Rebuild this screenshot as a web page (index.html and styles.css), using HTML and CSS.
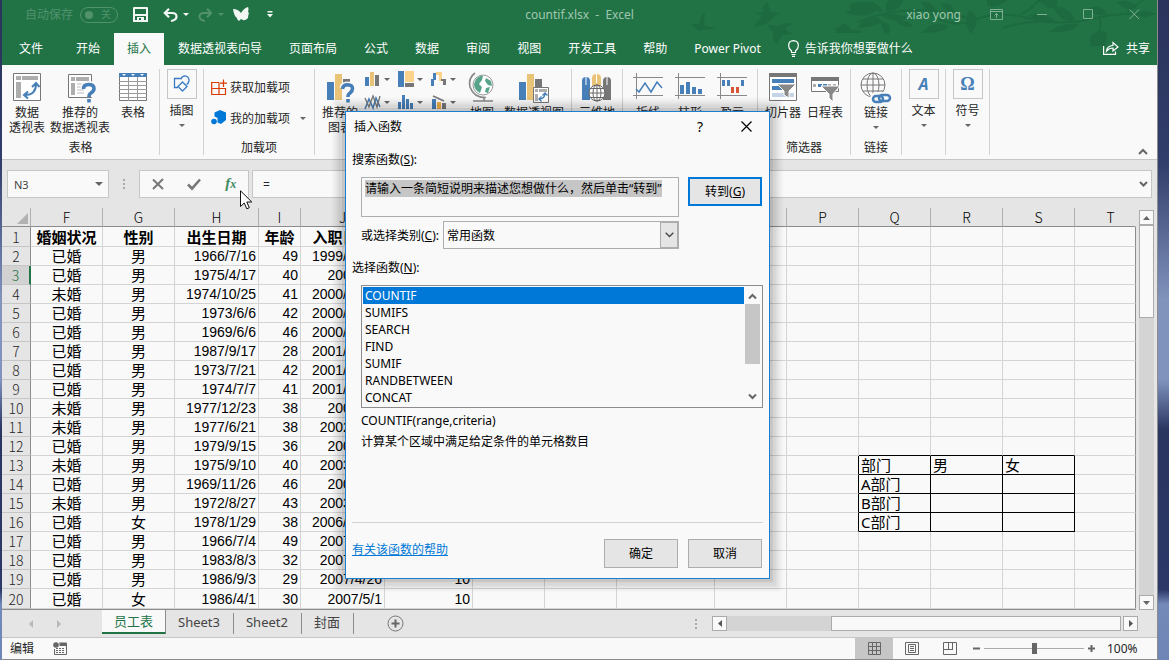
FILE: index.html
```
<!DOCTYPE html>
<html lang="zh-CN">
<head>
  <meta charset="UTF-8" />
  <meta name="viewport" content="width=device-width, initial-scale=1" />
  <title>countif.xlsx - Excel</title>
  <link rel="stylesheet" href="styles.css">
</head>
<body>
  <div class="window">

    <header class="titlebar">
      <svg class="branches" width="470" height="46" viewBox="0 0 470 46">
        <g fill="#1d6a40">
          <path d="M4 24 L12 24 Q13 16 18 13 Q17 20 17 25 L29 29 Q18 29 12 31 Q9 28 4 24Z"/>
          <path d="M66 13 L77 12 Q74 6 80 2 L84 12 L94 13 Q86 16 82 22 Q76 27 67 26 Q73 20 75 15Z"/>
          <path d="M81 25 L92 26 Q98 21 106 24 L98 28 Q100 32 108 34 L96 35 Q92 38 91 44 Q84 40 86 33Z"/>
          <path d="M146 28 Q152 29 155 24 Q162 23 163 29 L174 31 L174 33 L147 33 Q152 31 146 28Z"/>
          <path d="M158 12 Q170 6 184 14 Q170 18 158 12Z M163 9 Q160 2 176 2 Q186 6 188 13 Q174 14 163 9Z M178 2 Q190 -1 196 12 Q184 12 178 2Z M199 3 Q208 -4 216 0 Q212 12 199 12Z M194 15 Q210 12 222 18 Q206 24 194 15Z M176 20 Q190 14 196 22 Q186 27 170 28Z M194 22 Q206 22 202 34 Q194 32 194 22Z M208 20 Q222 20 226 27 Q214 28 208 20Z"/>
          <path d="M234 2 Q246 0 250 14 Q238 12 234 2Z M254 4 Q264 0 268 12 Q258 14 254 4Z M234 33 Q246 20 262 26 Q258 33 234 33Z M282 10 Q296 18 284 34 Q276 24 282 10Z M300 0 L320 0 Q312 8 300 6Z M350 0 L370 0 Q372 10 362 8Z"/>
          <path d="M342 15 Q360 12 370 22 Q354 26 342 15Z M366 6 Q386 8 388 22 Q372 22 366 6Z M362 32 Q374 22 392 24 Q384 34 362 32Z M410 32 Q424 28 418 46 L404 46 Q400 36 410 32Z M430 2 Q444 -2 450 8 Q438 12 430 2Z M448 14 Q460 8 468 14 Q458 20 448 14Z M402 8 Q414 4 420 14 Q408 18 402 8Z"/>
        </g>
        <g fill="none" stroke="#1d6a40" stroke-width="2">
          <path d="M170 22 Q200 10 234 10 Q262 12 280 18"/>
          <path d="M240 12 Q264 30 288 20 Q310 10 340 18 Q370 26 400 20 Q430 12 468 14"/>
          <path d="M316 28 Q334 22 352 22 M334 14 Q344 10 352 0 M412 18 Q416 24 410 36 M440 12 Q450 4 456 0"/>
        </g>
      </svg>
      <div class="quick">
        <span class="autosave">自动保存</span>
        <button class="toggle" type="button" aria-label="自动保存"><i></i>关</button>
        <button class="qbtn save" type="button" aria-label="保存">
          <svg width="15" height="15" viewBox="0 0 15 15"><path fill="#f3f7f4" fill-rule="evenodd" d="M1 0H14Q15 0 15 1V15H0V1Q0 0 1 0ZM2 2V7H13V2ZM2 9V13H4V10H11V13H13V9ZM6 11V13H8V11Z"/></svg>
        </button>
        <button class="qbtn undo" type="button" aria-label="撤消">
          <svg width="15" height="14" viewBox="0 0 15 14"><path d="M1.500 5H9Q13.500 5 13.500 8.500T8 13M6 .8L1.800 5L6 9.200" fill="none" stroke="#f3f7f4" stroke-width="2.200"/></svg>
          <i class="caret"></i>
        </button>
        <button class="qbtn redo" type="button" aria-label="恢复">
          <svg width="15" height="14" viewBox="0 0 15 14"><path d="M13.500 5H6Q1.500 5 1.500 8.500T7 13M9 .8L13.200 5L9 9.200" fill="none" stroke="#51926d" stroke-width="2"/></svg>
          <i class="caret"></i>
        </button>
        <button class="qbtn fly" type="button" aria-label="方方格子">
          <svg width="17" height="15" viewBox="0 0 17 15"><path fill="#f3f7f4" d="M0 2Q5 2 8 6Q11 1 15 0Q16 1 15 5L16 6Q15 8 15 11Q12 14 10 13L8 12L6 14Q4 13 4 11Q1 9 0 2Z"/></svg>
        </button>
        <button class="qbtn more" type="button" aria-label="自定义快速访问工具栏">
          <svg width="6" height="7" viewBox="0 0 6 7"><path fill="#f3f7f4" d="M.5 0H5.500V1.400H.5ZM0 3H6L3 6.500Z"/></svg>
        </button>
      </div>
      <div class="doc-title">countif.xlsx&nbsp; -&nbsp; Excel</div>
      <div class="controls">
        <span class="user">xiao yong</span>
        <button type="button" aria-label="功能区显示选项"><svg width="13" height="11" viewBox="0 0 13 11"><path d="M.5 .5H12.500V10.500H.5ZM.5 2.500H12.500M6.500 9V4.500M4.500 6.500L6.500 4.500L8.500 6.500"/></svg></button>
        <button type="button" aria-label="最小化"><svg width="11" height="11" viewBox="0 0 11 11"><path d="M0 5.500H10"/></svg></button>
        <button type="button" aria-label="最大化"><svg width="11" height="11" viewBox="0 0 11 11"><path d="M.5 .5H9.500V9.500H.5Z"/></svg></button>
        <button type="button" aria-label="关闭"><svg width="11" height="11" viewBox="0 0 11 11"><path d="M.5 .5L10 10M10 .5L.5 10"/></svg></button>
      </div>
    </header>

    <nav class="tabs">
      <button class="tab file" type="button">文件</button>
      <button class="tab" type="button">开始</button>
      <button class="tab active" type="button">插入</button>
      <button class="tab" type="button">数据透视表向导</button>
      <button class="tab" type="button">页面布局</button>
      <button class="tab" type="button">公式</button>
      <button class="tab" type="button">数据</button>
      <button class="tab" type="button">审阅</button>
      <button class="tab" type="button">视图</button>
      <button class="tab" type="button">开发工具</button>
      <button class="tab" type="button">帮助</button>
      <button class="tab" type="button">Power Pivot</button>
      <button class="tab tell" type="button">
        <svg width="11" height="17" viewBox="0 0 11 17"><path d="M3.500 12.500V11Q.6 8.500 .6 5.500Q.8 .7 5.500 .6Q10.200 .7 10.400 5.500Q10.400 8.500 7.500 11V12.500ZM3.500 14.500H7.500M4 16.300H7" fill="none" stroke="#fff" stroke-width="1.200"/></svg>
        告诉我你想要做什么
      </button>
      <button class="tab share" type="button">
        <svg width="16" height="14" viewBox="0 0 16 14"><path d="M.6 4V13.400H12.500V10.500M3.500 10Q4 5 10 4.500V1.500L15 6L10 10V7Q6 7 3.500 10Z" fill="none" stroke="#fff" stroke-width="1.200"/></svg>
        共享
      </button>
    </nav>

    <section class="ribbon">
      <div class="group g-tables">
        <div class="items">
          <button class="big" type="button">
            <svg width="28" height="28" viewBox="0 0 28 28"><path d="M.5 .5H27.500V27.500H.5Z" fill="#fff" stroke="#777"/><path d="M3 3H8V7H3ZM9 3H25V7H9ZM3 9H8V25H3Z" fill="#adadad"/><path d="M12 22Q23 22 23 11M19 14L23 10L26.500 14M15 18.500L11 22L15 25.500" fill="none" stroke="#477fb9" stroke-width="2"/></svg>
            <span>数据<br>透视表</span>
          </button>
          <button class="big" type="button">
            <svg width="28" height="28" viewBox="0 0 28 28"><path d="M2.500 1.500H25.500V24.500H2.500Z" fill="#fff" stroke="#777"/><path d="M5 4H9V8H5ZM10 4H23V8H10ZM5 10H9V22H5Z" fill="#adadad"/><path d="M11 11H18M11 14H18M11 17H18M11 20H18" stroke="#bbb"/><path d="M17.500 15Q17.500 11 22.500 11Q28 11 28 15.500Q28 18 25 20Q23 21.500 23 24" fill="none" stroke="#f9f9f9" stroke-width="6"/><path d="M17.500 16Q17.500 11.500 22.500 11.500Q28 11.500 28 15.500Q28 18 25 20Q23 21 23 24M23 26V29.500" fill="none" stroke="#477fb9" stroke-width="3.600"/></svg>
            <span>推荐的<br>数据透视表</span>
          </button>
          <button class="big" type="button">
            <svg width="28" height="28" viewBox="0 0 28 28"><path d="M.5 .5H27.500V27.500H.5Z" fill="#fff" stroke="#777"/><path d="M0 0H28V4H0Z" fill="#477fb9"/><path d="M3 1H7L5 3ZM12 1H16L14 3ZM21 1H25L23 3Z" fill="#fff"/><path d="M0 8.500H28M0 12.500H28M0 16.500H28M0 20.500H28M0 24.500H28M9.500 4V28M18.500 4V28" stroke="#999"/></svg>
            <span>表格</span>
          </button>
        </div>
        <div class="caption">表格</div>
      </div>

      <div class="group g-narrow">
        <div class="items">
          <button class="boxed" type="button">
            <b><svg width="18" height="18" viewBox="0 0 18 18"><path d="M5 12.500H1.500V3.500H9M8 4Q9 .8 12 .8Q16.500 1.500 16 6Q15.500 8.500 13.500 9.500M9.500 7L14 11.500L9.500 16L5 11.500Z" fill="none" stroke="#3b7cc4" stroke-width="1.300"/></svg></b>
            <span>插图</span><i class="caret"></i>
          </button>
        </div>
      </div>

      <div class="group g-addins">
        <div class="items stack">
          <button class="line" type="button">
            <svg width="16" height="17" viewBox="0 0 16 17"><path d="M8 3.500H.7V15.500H14.500V9.500H.7M8 3.500V15.500M12.500 .5V8M9 4.200H16" fill="none" stroke="#d83b01" stroke-width="1.200"/></svg>
            获取加载项
          </button>
          <button class="line" type="button">
            <svg width="16" height="16" viewBox="0 0 16 16"><path d="M9 0L15 2.500V10L10 14L6.500 12.500V8L3.500 6.500V2.500Z" fill="#0078d7"/><circle cx="3" cy="11.500" r="2.800" fill="#0078d7"/></svg>
            我的加载项 <i class="caret"></i>
          </button>
        </div>
        <div class="caption">加载项</div>
      </div>

      <div class="group g-charts">
        <div class="items">
          <button class="big w50" type="button">
            <svg width="28" height="28" viewBox="0 0 28 28"><path d="M1 9H8V27H1Z" fill="#477fb9"/><path d="M9 1H16V27H9Z" fill="#e9c478"/><path d="M17 6H24V12H17Z" fill="#777"/><path d="M16.500 15Q17 11.500 21.500 11.500Q26.500 11.500 26.500 15.500Q26.500 18 24 20Q22 21 22 24" fill="none" stroke="#f9f9f9" stroke-width="6"/><path d="M16.500 16Q17 11.800 21.500 11.800Q26.500 12 26.500 15.500Q26.500 18 24 20Q22 21 22 24M22 26V29.500" fill="none" stroke="#477fb9" stroke-width="3.600"/></svg>
            <span>推荐的<br>图表</span>
          </button>
          <div class="minis">
            <button type="button" aria-label="柱形图"><svg width="16" height="16" viewBox="0 0 16 16"><path d="M0 6H4V15H0Z" fill="#477fb9"/><path d="M5 1H9V15H5Z" fill="#e9c478"/><path d="M10 4H14V15H10Z" fill="#777"/></svg><i class="caret"></i></button>
            <button type="button" aria-label="层次结构图"><svg width="16" height="16" viewBox="0 0 16 16"><path d="M0 0H6V16H0Z" fill="#477fb9"/><path d="M7 0H16V11H7Z" fill="#fbd38a"/><path d="M7 12H16V16H7Z" fill="#777"/></svg><i class="caret"></i></button>
            <button type="button" aria-label="瀑布图"><svg width="16" height="16" viewBox="0 0 16 16"><path d="M0 8H3V15H0ZM2 2H5V9H2Z" fill="#477fb9"/><path d="M5 1H11V10H8V4H5Z" fill="#fbd38a"/><path d="M10 8H15V14H12V10H10Z" fill="#777"/></svg><i class="caret"></i></button>
            <button type="button" aria-label="折线图"><svg width="16" height="16" viewBox="0 0 16 16"><path d="M0 15L4 5L8 14L11 4L15 13" fill="none" stroke="#477fb9" stroke-width="1.500"/><path d="M0 4L4 13L8 2L12 13L15 2" fill="none" stroke="#777" stroke-width="1.300"/></svg><i class="caret"></i></button>
            <button type="button" aria-label="统计图"><svg width="16" height="16" viewBox="0 0 16 16"><path d="M0 8H3V15H0ZM4 1H7V15H4ZM8 5H11V15H8ZM12 9H15V15H12Z" fill="#477fb9"/></svg><i class="caret"></i></button>
            <button type="button" aria-label="组合图"><svg width="16" height="16" viewBox="0 0 16 16"><path d="M1 5H5V15H1Z" fill="#477fb9"/><path d="M6 8H10V15H6Z" fill="#f0b24a"/><path d="M11 9H15V15H11Z" fill="#777"/><path d="M2 2L13 7" stroke="#777" stroke-width="1.500"/></svg><i class="caret"></i></button>
          </div>
          <button class="big" type="button">
            <svg width="28" height="28" viewBox="0 0 28 28"><circle cx="15" cy="12" r="10" fill="#fff" stroke="#999"/><path d="M8 6Q12 2 15 3L14 7L11 11L14 14L12 20Q6 17 6 11ZM18 5L23 8L24 13L20 12L17 8ZM18 15L22 14L20 20L17 19Z" fill="#57a48a"/><path d="M7 0Q0 5 2 14Q6 25 18 24.500M16 24V28M5 28H25" fill="none" stroke="#888" stroke-width="1.600"/></svg>
            <span>地图</span>
          </button>
          <button class="big" type="button">
            <svg width="30" height="28" viewBox="0 0 30 28"><path d="M0 9H7V27H0Z" fill="#477fb9"/><path d="M8 1H15V27H8Z" fill="#e9c478"/><path d="M16 6H23V14H16Z" fill="#777"/><path d="M14.500 14.500H29.500V29.500H14.500Z" fill="#fff" stroke="#777"/><path d="M16 16H19V19H16ZM20 16H28V19H20ZM16 21H19V28H16Z" fill="#adadad"/><path d="M20 26Q26 26 26 20M23.500 22.500L26 20L28.500 22.500M22.500 23.500L20 26L22.500 28.500" fill="none" stroke="#477fb9" stroke-width="1.300"/></svg>
            <span>数据透视图</span>
          </button>
        </div>
        <div class="caption">图表</div>
      </div>

      <div class="group g-link">
        <div class="items">
          <button class="big" type="button">
            <svg width="30" height="28" viewBox="0 0 30 28"><path d="M0 27V8Q0 4 4 4T8 8V27Z" fill="#477fb9"/><path d="M10 24V5Q10 1 14.500 1T19 5V24Z" fill="#e9c478"/><path d="M21 27V8Q21 4 25 4T29 8V27Z" fill="#777"/><path d="M4 4V12M14.500 1V10M25 4V12" stroke="#fff"/><circle cx="15" cy="20" r="8" fill="#fff" stroke="#666"/><path d="M7 20H23M15 12V28M9 15.500H21M9 24.500H21" stroke="#666" fill="none"/><ellipse cx="15" cy="20" rx="4" ry="8" fill="none" stroke="#666"/></svg>
            <span>三维地<br>图</span>
          </button>
        </div>
        <div class="caption">演示</div>
      </div>

      <div class="group g-spark">
        <div class="items">
          <button class="big w42" type="button">
            <svg width="30" height="28" viewBox="0 0 30 28"><path d="M0 4.500H30M0 22.500H30M3.500 0V26" stroke="#888"/><path d="M3 16L6 19L12 10L18 19L24 9L29 15" fill="none" stroke="#477fb9" stroke-width="1.500"/></svg>
            <span>折线</span>
          </button>
          <button class="big w42" type="button">
            <svg width="30" height="28" viewBox="0 0 30 28"><path d="M0 4.500H30M0 22.500H30M3.500 0V26" stroke="#888"/><path d="M5 12H9V21H5ZM11 9H15V21H11ZM17 14H21V21H17ZM23 16H27V21H23Z" fill="#477fb9"/></svg>
            <span>柱形</span>
          </button>
          <button class="big w42" type="button">
            <svg width="30" height="28" viewBox="0 0 30 28"><path d="M0 4.500H30M0 22.500H30M3.500 0V26" stroke="#888"/><path d="M5 7H8V13H5ZM10 7H13V13H10ZM24 7H27V13H24Z" fill="#477fb9"/><path d="M14 14H17V20H14ZM19 14H22V20H19Z" fill="#d65532"/></svg>
            <span>盈亏</span>
          </button>
        </div>
        <div class="caption">迷你图</div>
      </div>

      <div class="group g-filters">
        <div class="items spaced">
          <button class="big" type="button">
            <svg width="28" height="28" viewBox="0 0 28 28"><path d="M.5 .5H27.500V27.500H.5Z" fill="#fff" stroke="#777"/><path d="M0 0H28V4H0Z" fill="#777"/><path d="M3 6H25V10H3ZM3 13H13V17H3Z" fill="#477fb9"/><path d="M3 20H25V24H3Z" fill="#c5d3e6"/><path d="M8 11H27L20 18V25L15 22V18Z" fill="#888" stroke="#fff"/></svg>
            <span>切片器</span>
          </button>
          <button class="big" type="button">
            <svg width="30" height="28" viewBox="0 0 30 28"><path d="M1.500 4.500H28.500V18.500H1.500Z" fill="#fff" stroke="#777"/><path d="M1 4H29V8H1Z" fill="#777"/><path d="M3 11H6V14H3ZM18 11H21V14H18ZM23 11H26V14H23Z" fill="#adadad"/><path d="M8 11H12V14H8ZM13 11H17V14H13Z" fill="#477fb9"/><path d="M11 13H30L23 21V29L19 25V21Z" fill="#888" stroke="#fff"/></svg>
            <span>日程表</span>
          </button>
        </div>
        <div class="caption">筛选器</div>
      </div>

      <div class="group g-link">
        <div class="items">
          <button class="big" type="button">
            <svg width="30" height="28" viewBox="0 0 30 28"><g fill="none" stroke="#777"><circle cx="12" cy="12" r="12"/><ellipse cx="12" cy="12" rx="6" ry="12"/><path d="M12 0V24M0 12H24M2 6H22M2 18H22"/></g><g fill="none" stroke="#f9f9f9" stroke-width="6"><rect x="12" y="22" width="11" height="6" rx="3"/><rect x="19" y="22" width="10" height="6" rx="3"/></g><g fill="none" stroke="#477fb9" stroke-width="2.500"><rect x="12" y="23" width="10" height="6" rx="3"/><rect x="18" y="22" width="11" height="6" rx="3"/></g></svg>
            <span>链接</span><i class="caret"></i>
          </button>
        </div>
        <div class="caption">链接</div>
      </div>

      <div class="group g-narrow">
        <div class="items">
          <button class="boxed" type="button"><b class="letter italic">A</b><span>文本</span><i class="caret"></i></button>
        </div>
      </div>
      <div class="group g-narrow">
        <div class="items">
          <button class="boxed" type="button"><b class="letter omega">Ω</b><span>符号</span><i class="caret"></i></button>
        </div>
      </div>
      <button class="collapse" type="button" aria-label="折叠功能区"><svg width="10" height="7" viewBox="0 0 10 7"><path d="M1 6L5 2L9 6" fill="none" stroke="#666" stroke-width="2"/></svg></button>
    </section>

    <section class="formula-bar">
      <div class="name-box"><input type="text" value="N3" aria-label="名称框"><i class="caret"></i></div>
      <div class="dots"><i></i><i></i><i></i></div>
      <div class="fx-box">
        <button type="button" aria-label="取消输入"><svg width="12" height="12" viewBox="0 0 12 12"><path d="M1 1.500L11 11M11 1L1 11" stroke="#777" stroke-width="2"/></svg></button>
        <button type="button" aria-label="输入"><svg width="14" height="12" viewBox="0 0 14 12"><path d="M1 6.500L5 10.500L13 1.500" fill="none" stroke="#777" stroke-width="2.600"/></svg></button>
        <button type="button" class="fx" aria-label="插入函数">f<small>x</small></button>
      </div>
      <div class="formula-input">
        <input type="text" value="=" aria-label="编辑栏">
        <svg width="9" height="7" viewBox="0 0 9 7"><path d="M1 1L4.500 4.500L8 1" fill="none" stroke="#666" stroke-width="2"/></svg>
      </div>
    </section>

    <main class="sheet">
      <table class="grid">
        <colgroup>
          <col class="c-head"><col class="c-std"><col class="c-std"><col class="c-date"><col class="c-age"><col class="c-date"><col class="c-year">
          <col class="c-std"><col class="c-std"><col class="c-wide"><col class="c-std"><col class="c-std"><col class="c-std"><col class="c-std"><col class="c-std"><col>
        </colgroup>
        <thead>
          <tr><th class="corner"><svg width="11" height="11" viewBox="0 0 11 11"><path d="M11 0V11H0Z" fill="#b2b2b2"/></svg></th><th>F</th><th>G</th><th>H</th><th>I</th><th>J</th><th>K</th><th>L</th><th>M</th><th>N</th><th>O</th><th>P</th><th>Q</th><th>R</th><th>S</th><th class="last">T</th></tr>
        </thead>
        <tbody id="rows"></tbody>
      </table>
      <div class="vscroll">
        <button type="button" aria-label="向上滚动"><svg width="7" height="4" viewBox="0 0 7 4"><path d="M0 4L3.500 0L7 4Z" fill="#666"/></svg></button>
        <div class="vtrack"><div class="vthumb"></div></div>
        <button type="button" aria-label="向下滚动"><svg width="7" height="4" viewBox="0 0 7 4"><path d="M0 0H7L3.500 4Z" fill="#666"/></svg></button>
      </div>
    </main>

    <div class="sheet-bar">
      <div class="sheet-nav">
        <svg width="4" height="8" viewBox="0 0 4 8"><path d="M4 0V8L0 4Z" fill="#b8b8b8"/></svg>
        <svg width="4" height="8" viewBox="0 0 4 8"><path d="M0 0V8L4 4Z" fill="#b8b8b8"/></svg>
      </div>
      <button class="sheet-tab on" type="button">员工表</button>
      <button class="sheet-tab" type="button">Sheet3</button>
      <button class="sheet-tab" type="button">Sheet2</button>
      <button class="sheet-tab" type="button">封面</button>
      <button class="add-sheet" type="button" aria-label="新工作表"><svg width="17" height="17" viewBox="0 0 17 17"><circle cx="8.500" cy="8.500" r="7.500" fill="none" stroke="#777"/><path d="M8.500 4.500V12.500M4.500 8.500H12.500" stroke="#666" stroke-width="2"/></svg></button>
      <div class="dots"><i></i><i></i><i></i></div>
      <div class="hscroll">
        <button type="button" aria-label="向左滚动"><svg width="4" height="7" viewBox="0 0 4 7"><path d="M4 0V7L0 3.500Z" fill="#555"/></svg></button>
        <div class="htrack"><div class="hthumb"></div></div>
        <button type="button" aria-label="向右滚动"><svg width="4" height="7" viewBox="0 0 4 7"><path d="M0 0V7L4 3.500Z" fill="#555"/></svg></button>
      </div>
    </div>

    <footer class="status">
      <span class="mode">编辑</span>
      <svg width="14" height="13" viewBox="0 0 14 13"><circle cx="3" cy="3" r="2.800" fill="#666"/><path d="M6 1H13.500V12.500H1.500V7M6 3H13" fill="none" stroke="#666"/><path d="M7 1H13V4H7Z" fill="#666"/><path d="M3 6.500H12M3 8.500H12M3 10.500H12" stroke="#666" stroke-dasharray="2 1"/></svg>
      <div class="views">
        <button class="on" type="button" aria-label="普通"><svg width="13" height="13" viewBox="0 0 13 13"><path d="M.5 .5H12.500V12.500H.5ZM4.500 0V13M8.500 0V13M0 4.500H13M0 8.500H13"/></svg></button>
        <button type="button" aria-label="页面布局"><svg width="14" height="13" viewBox="0 0 14 13"><path d="M.5 .5H13.500V12.500H.5ZM3.500 2.500H10.500V10.500H3.500ZM5 4.500H9M5 6.500H9M5 8.500H9"/></svg></button>
        <button type="button" aria-label="分页预览"><svg width="14" height="13" viewBox="0 0 14 13"><path d="M.5 .5H13.500V12.500H.5ZM5.500 0V7.500M9.500 0V7.500M0 7.500H10"/></svg></button>
      </div>
      <button class="zoom-btn" type="button" aria-label="缩小"><svg width="7" height="7" viewBox="0 0 7 7"><path d="M0 3.500H7" stroke="#666" stroke-width="2"/></svg></button>
      <input class="zoom" type="range" min="0" max="100" value="50" aria-label="缩放">
      <button class="zoom-btn" type="button" aria-label="放大"><svg width="7" height="7" viewBox="0 0 7 7"><path d="M0 3.500H7M3.500 0V7" stroke="#666" stroke-width="2"/></svg></button>
      <span class="percent">100%</span>
    </footer>
  </div>

  <form class="dialog" role="dialog" aria-labelledby="dlgTitle">
    <div class="dlg-head">
      <h1 id="dlgTitle">插入函数</h1>
      <button type="button" aria-label="帮助">?</button>
      <button type="button" aria-label="关闭"><svg width="11" height="11" viewBox="0 0 11 11"><path d="M.5 .5L10.500 10.500M10.500 .5L.5 10.500" stroke="#000" stroke-width="1.200"/></svg></button>
    </div>
    <div class="dlg-body">
      <label for="search">搜索函数(<u>S</u>):</label>
      <div class="row search-row">
        <textarea id="search">请输入一条简短说明来描述您想做什么，然后单击“转到”</textarea>
        <button class="btn primary" type="button">转到(<u>G</u>)</button>
      </div>
      <div class="row cat-row">
        <label for="category">或选择类别(<u>C</u>):</label>
        <div class="combo">
          <select id="category"><option>常用函数</option></select>
          <span><svg width="9" height="6" viewBox="0 0 9 6"><path d="M.7 .7L4.500 4.500L8.300 .7" fill="none" stroke="#444" stroke-width="1.300"/></svg></span>
        </div>
      </div>
      <label for="funcs">选择函数(<u>N</u>):</label>
      <div class="listbox">
        <select id="funcs" size="7">
          <option selected>COUNTIF</option>
          <option>SUMIFS</option>
          <option>SEARCH</option>
          <option>FIND</option>
          <option>SUMIF</option>
          <option>RANDBETWEEN</option>
          <option>CONCAT</option>
        </select>
        <div class="list-scroll">
          <svg width="9" height="7" viewBox="0 0 9 7"><path d="M1 5.500L4.500 2L8 5.500" fill="none" stroke="#666" stroke-width="2"/></svg>
          <div class="list-thumb"></div>
          <svg width="9" height="7" viewBox="0 0 9 7"><path d="M1 1.500L4.500 5L8 1.500" fill="none" stroke="#666" stroke-width="2"/></svg>
        </div>
      </div>
      <p class="syntax">COUNTIF(range,criteria)</p>
      <p class="desc">计算某个区域中满足给定条件的单元格数目</p>
    </div>
    <div class="dlg-foot">
      <a href="#">有关该函数的帮助</a>
      <button class="btn" type="button">确定</button>
      <button class="btn" type="button">取消</button>
    </div>
  </form>

  <svg class="pointer" width="13" height="20" viewBox="0 0 13 20"><path d="M.5 .8V16.500L4.200 13L6.800 18.800L9.300 17.700L6.800 12H11.800Z" fill="#fff" stroke="#111"/></svg>

  <script>
    const staff = [
      ['已婚', '男', '1966/7/16', 49, '1999/10/18'],
      ['已婚', '男', '1975/4/17', 40, '2000/3/1'],
      ['未婚', '男', '1974/10/25', 41, '2000/10/12'],
      ['已婚', '男', '1973/6/6', 42, '2000/12/15'],
      ['已婚', '男', '1969/6/6', 46, '2000/12/20'],
      ['已婚', '男', '1987/9/17', 28, '2001/10/10'],
      ['已婚', '男', '1973/7/21', 42, '2001/10/16'],
      ['已婚', '男', '1974/7/7', 41, '2001/12/21'],
      ['未婚', '男', '1977/12/23', 38, '2002/5/6'],
      ['未婚', '男', '1977/6/21', 38, '2002/8/12'],
      ['已婚', '男', '1979/9/15', 36, '2003/2/8'],
      ['未婚', '男', '1975/9/10', 40, '2003/4/15'],
      ['已婚', '男', '1969/11/26', 46, '2003/7/1'],
      ['未婚', '男', '1972/8/27', 43, '2003/9/22'],
      ['已婚', '女', '1978/1/29', 38, '2006/10/12'],
      ['已婚', '男', '1966/7/4', 49, '2007/1/15'],
      ['已婚', '男', '1983/8/3', 32, '2007/3/19'],
      ['已婚', '男', '1986/9/3', 29, '2007/4/26', 10],
      ['已婚', '女', '1986/4/1', 30, '2007/5/1', 10]
    ];
    const summary = { 13: ['部门', '男', '女'], 14: ['A部门'], 15: ['B部门'], 16: ['C部门'] };

    let html = '<tr><th>1</th><td class="h">婚姻状况</td><td class="h">性别</td><td class="h">出生日期</td><td class="h">年龄</td><td class="h">入职日期</td>' + '<td></td>'.repeat(9) + '<td class="last"></td></tr>';
    staff.forEach((p, i) => {
      const n = i + 2;
      html += `<tr><th class="${n === 3 ? 'current' : ''}">${n}</th><td class="c">${p[0]}</td><td class="c">${p[1]}</td>`;
      for (let k = 2; k < 6; k++) html += `<td class="n">${p[k] || ''}</td>`;
      // columns L..P
      html += '<td></td>'.repeat(4) + `<td class="${summary[n] ? 'edge' : ''}"></td>`;
      // columns Q..S
      for (let k = 0; k < 3; k++) {
        const cls = summary[n] ? 'box' : (n === 12 ? 'under' : '');
        html += `<td class="${cls}">${(summary[n] && summary[n][k]) || ''}</td>`;
      }
      html += '<td class="last"></td></tr>';
    });
    document.getElementById('rows').innerHTML = html;

    const search = document.getElementById('search');
    search.focus();
    search.select();
  </script>
</body>
</html>
```

FILE: styles.css
```
* {
  box-sizing: border-box;
}
body {
  margin: 0;
  min-height: 100vh;
  padding: 0 11px 0 2px;
  background: linear-gradient(#29335c 0, #323e6b 165px, #8194bc 300px, #7f93bd 380px, #2a3560 430px, #2c3868 590px, #7389b8 604px, #6f86b6 100%);
  font-family: "Noto Sans", "Noto Sans CJK SC", sans-serif;
  font-size: 12px;
  line-height: 15px;
  color: #262626;
  overflow: hidden;
}
button, input, select, textarea {
  font: inherit;
  color: inherit;
  border: 0;
  border-radius: 0;
  background: none;
  margin: 0;
  padding: 0;
  outline: none;
}
svg {
  display: block;
  flex: none;
  overflow: visible;
}
.window {
  min-height: 100vh;
  display: flex;
  flex-direction: column;
  background: #e5e5e5;
  border-right: 1px solid #8c8c8c;
  border-bottom: 1px solid #8c8c8c;
}
.caret {
  display: block;
  flex: none;
  width: 0;
  border: 3px solid transparent;
  border-top-color: #666;
  border-bottom: 0;
}

/* title bar */
.titlebar {
  position: relative;
  display: grid;
  grid-template-columns: 1fr auto 1fr;
  align-items: center;
  height: 33px;
  padding-bottom: 4px;
  background: #217346;
  color: #a0c8b0;
}
.branches {
  position: absolute;
  right: 0;
  top: 0;
  z-index: 1;
}
.quick {
  display: flex;
  align-items: center;
  padding-left: 23px;
}
.autosave {
  color: #51926d;
}
.toggle {
  display: flex;
  align-items: center;
  justify-content: space-between;
  width: 38px;
  height: 16px;
  margin-left: 7px;
  padding: 0 6px 0 4px;
  border: 1px solid #51926d;
  border-radius: 8px;
  color: #51926d;
  font-size: 10px;
}
.toggle i {
  width: 8px;
  height: 8px;
  border-radius: 4px;
  background: #51926d;
}
.qbtn {
  display: flex;
  align-items: center;
  gap: 5px;
  margin-left: 15px;
}
.qbtn .caret {
  border-top-color: #f3f7f4;
}
.redo {
  margin-left: 9px;
}
.redo .caret {
  border-top-color: #51926d;
}
.fly {
  margin-left: 9px;
}
.more {
  margin-left: 17px;
}
.controls {
  display: flex;
  align-items: center;
  justify-content: flex-end;
  position: relative;
  z-index: 2;
}
.controls button {
  display: flex;
  justify-content: center;
  width: 46px;
}
.controls path {
  fill: none;
  stroke: #7fb093;
}
.user {
  margin-right: 12px;
}

/* ribbon tabs */
.tabs {
  display: flex;
  gap: 1px;
  height: 32px;
  background: #217346;
}
.tab {
  display: flex;
  align-items: center;
  padding: 0 13px 2px;
  color: #fff;
  white-space: nowrap;
}
.tab.file {
  padding: 0 19px 2px 17px;
}
.tab.active {
  background: #f9f9f9;
  color: #217346;
}
.tab.tell {
  gap: 6px;
}
.tab.share {
  gap: 7px;
  margin-left: auto;
  padding: 0 7px 2px;
}

/* ribbon */
.ribbon {
  display: flex;
  padding: 4px 0;
  background: #f9f9f9;
  border-bottom: 1px solid #c6c6c6;
}
.group {
  display: flex;
  flex-direction: column;
  justify-content: space-between;
  flex: none;
  height: 86px;
  border-right: 1px solid #d2d2d2;
}
.g-tables { width: 158px; }
.g-narrow { width: 44px; }
.g-addins { width: 111px; }
.g-charts { width: 257px; }
.g-link { width: 51px; }
.g-spark { width: 135px; }
.g-filters { width: 93px; }
.items {
  display: flex;
  justify-content: center;
}
.g-tables .items {
  justify-content: flex-start;
  gap: 5px;
  padding-left: 7px;
}
.g-charts .items {
  justify-content: flex-start;
}
.g-charts .big + .big {
  margin-left: 4px;
}
.items.spaced {
  gap: 6px;
}
.caption {
  text-align: center;
}
.big {
  display: flex;
  flex-direction: column;
  align-items: center;
  min-width: 36px;
  padding-top: 4px;
}
.big svg {
  height: 28px;
}
.big span {
  margin-top: 4px;
  white-space: nowrap;
}
.big .caret {
  margin-top: 6px;
}
.w50 { width: 50px; }
.w42 { width: 42px; }
.boxed {
  display: flex;
  flex-direction: column;
  align-items: center;
}
.boxed b {
  display: flex;
  align-items: center;
  justify-content: center;
  width: 30px;
  height: 30px;
  border: 1px solid #c6c6c6;
}
.boxed span {
  margin-top: 4px;
}
.boxed .caret {
  margin-top: 6px;
}
.letter {
  color: #477fb9;
  font-size: 16px;
}
.italic {
  font-family: "Open Sans", sans-serif;
  font-style: italic;
}
.omega {
  font-family: "Liberation Serif", serif;
  font-size: 18px;
}
.stack {
  flex-direction: column;
  gap: 15px;
  padding: 10px 0 0 7px;
}
.line {
  display: flex;
  align-items: center;
  gap: 3px;
  height: 16px;
}
.line .caret {
  margin-left: 7px;
}
.minis {
  display: grid;
  grid-template-columns: repeat(3, 33px);
  row-gap: 7px;
  align-content: start;
  padding-top: 2px;
}
.minis button {
  display: flex;
  align-items: center;
  gap: 3px;
}
.collapse {
  margin-left: auto;
  align-self: flex-end;
  padding: 0 9px 0 0;
}

/* formula bar */
.formula-bar {
  display: flex;
  height: 48px;
  padding: 10px 5px;
}
.name-box, .fx-box, .formula-input {
  display: flex;
  align-items: center;
  height: 28px;
  background: #f9f9f9;
  border: 1px solid #c6c6c6;
}
.name-box {
  width: 102px;
  padding: 0 5px 0 6px;
}
.name-box input {
  flex: 1;
  min-width: 0;
  font-size: 11px;
  color: #444;
}
.name-box .caret {
  border-width: 4px 4px 0;
}
.dots {
  display: flex;
  flex-direction: column;
  justify-content: center;
  gap: 2px;
  margin: 0 14px;
}
.dots i {
  width: 2px;
  height: 2px;
  background: #aaa;
}
.fx-box {
  justify-content: space-around;
  width: 110px;
}
.fx {
  font-family: "Liberation Serif", serif;
  font-style: italic;
  font-weight: bold;
  font-size: 15px;
  color: #3d8a5f;
}
.fx small {
  font-size: 12px;
}
.formula-input {
  flex: 1;
  margin-left: 3px;
  padding: 0 3px 0 10px;
}
.formula-input input {
  flex: 1;
}

/* worksheet */
.sheet {
  display: flex;
}
.grid {
  flex: 1;
  table-layout: fixed;
  width: 100%;
  border-spacing: 0;
  background: #f9f9f9;
  color: #000;
  font-size: 15px;
  line-height: 18px;
  border-bottom: 1px solid #8c8c8c;
}
.c-head { width: 29px; }
.c-std { width: 72px; }
.c-date { width: 84px; }
.c-age { width: 42px; }
.c-year { width: 88px; }
.c-wide { width: 98px; }
.grid th, .grid td {
  height: 19px;
  padding: 0 2px;
  border-right: 1px solid #d4d4d4;
  border-bottom: 1px solid #d4d4d4;
  white-space: nowrap;
  overflow: hidden;
}
.grid th {
  background: #e5e5e5;
  border-color: #c6c6c6;
  font-family: "Noto Sans CJK SC", sans-serif;
  font-size: 14px;
  font-weight: 300;
}
.grid thead th {
  border-bottom-color: #8c8c8c;
  border-right-color: #b0b0b0;
}
.grid .corner svg {
  margin: 3px 0 0 auto;
}
.grid tbody th {
  border-right-color: #8c8c8c;
  color: #262626;
}
.grid tbody tr:first-child > *,
.grid tbody tr:last-child > * {
  height: 20px;
}
.grid th.current {
  background: #d2d2d2;
  color: #217346;
  border-right: 2px solid #217346;
}
.grid td.h {
  font-weight: bold;
  text-align: center;
}
.grid td.c {
  text-align: center;
}
.grid td.n {
  font-family: "Liberation Sans", sans-serif;
  font-size: 14px;
  font-kerning: none;
  text-align: right;
}
.grid td.edge {
  border-right-color: #000;
}
.grid td.box {
  border-right-color: #000;
  border-bottom-color: #000;
}
.grid td.under {
  border-bottom-color: #000;
}
.grid .last {
  border-right-color: #8c8c8c;
}
/* T runs on past the edge of the view */
.grid th.last {
  padding-left: 13px;
  border-right-color: #e5e5e5;
}
.vscroll {
  display: flex;
  flex-direction: column;
  width: 15px;
  margin: 2px 3px 0;
}
.vscroll button, .hscroll button {
  display: flex;
  flex: none;
  align-items: center;
  justify-content: center;
  width: 15px;
  height: 15px;
  background: #f9f9f9;
  border: 1px solid #ababab;
}
.vtrack {
  flex: 1;
  background: #d4d4d4;
}
.vthumb {
  height: 93px;
  background: #f9f9f9;
  border: 1px solid #ababab;
}

/* sheet tabs */
.sheet-bar {
  display: flex;
  align-items: center;
  height: 28px;
  border-bottom: 1px solid #c6c6c6;
  color: #444;
  font-size: 13px;
}
.sheet-nav {
  display: flex;
  gap: 24px;
  width: 100px;
  padding-left: 27px;
}
.sheet-tab {
  padding: 2px 13px 4px 12px;
  border-right: 1px solid #8c8c8c;
}
.sheet-tab.on {
  align-self: flex-start;
  height: 24px;
  padding: 0 12px;
  background: #f9f9f9;
  border-bottom: 2px solid #217346;
  color: #217346;
}
.add-sheet {
  margin-left: 33px;
}
.sheet-bar .dots {
  margin: 0 15px 0 auto;
}
.hscroll {
  display: flex;
  gap: 2px;
  width: 426px;
  margin-right: 19px;
}
.htrack {
  flex: 1;
  margin-left: -2px;
  background: #d4d4d4;
}
.hthumb {
  width: 290px;
  height: 15px;
  margin-left: auto;
  background: #f9f9f9;
  border: 1px solid #ababab;
}

/* status bar */
.status {
  display: flex;
  flex: 1;
  align-items: center;
  min-height: 21px;
  padding-left: 8px;
  background: #f9f9f9;
}
.mode {
  margin-right: 19px;
}
.views {
  display: flex;
  align-self: stretch;
  margin-left: auto;
}
.views button {
  display: flex;
  align-items: center;
  justify-content: center;
  width: 38px;
}
.views .on {
  background: #c6c6c6;
}
.views path {
  fill: none;
  stroke: #666;
}
.zoom-btn {
  margin: 0 0 0 4px;
}
.zoom {
  appearance: none;
  width: 100px;
  height: 12px;
  margin: 0 0 0 4px;
  background: linear-gradient(#ababab, #ababab) center / 100% 1px no-repeat;
}
.zoom::-webkit-slider-thumb {
  appearance: none;
  width: 5px;
  height: 11px;
  background: #666;
}
.percent {
  width: 32px;
  margin: 0 18px 0 12px;
}

/* insert function dialog */
.dialog {
  position: absolute;
  left: 345px;
  top: 111px;
  width: 425px;
  background: #f9f9f9;
  border: 1px solid #1a7fd0;
  color: #000;
  z-index: 3;
  box-shadow: 0 0 0 3px rgba(0, 0, 0, .08), 0 0 2px 7px rgba(0, 0, 0, .06), 0 0 4px 11px rgba(0, 0, 0, .08);
}
.dlg-head {
  display: flex;
  align-items: center;
  height: 28px;
  padding-left: 8px;
}
.dlg-head h1 {
  flex: 1;
  margin: 0;
  font-size: 12px;
  font-weight: normal;
}
.dlg-head button {
  display: flex;
  align-items: center;
  justify-content: center;
  width: 46px;
  font-size: 14px;
}
.dlg-body {
  margin: 0 6px;
  padding-top: 12px;
  height: 383px;
  border-bottom: 1px solid #d2d2d2;
}
.dlg-body label {
  display: block;
}
.row {
  display: flex;
  padding-left: 9px;
}
.search-row {
  gap: 9px;
  margin-top: 10px;
}
.search-row textarea {
  width: 318px;
  height: 40px;
  padding: 2px 3px;
  border: 1px solid #adadad;
  line-height: 17px;
  resize: none;
  overflow: hidden;
}
.search-row textarea::selection {
  background: #c6c6c6;
  color: #000;
}
.btn {
  width: 74px;
  height: 29px;
  background: #e5e5e5;
  border: 1px solid #adadad;
}
.btn.primary {
  border: 2px solid #0078d7;
}
.cat-row {
  align-items: center;
  justify-content: space-between;
  width: 327px;
  margin: 4px 0 11px;
}
.combo {
  display: flex;
  width: 236px;
  height: 28px;
  border: 1px solid #adadad;
}
.combo select {
  appearance: none;
  flex: 1;
  padding-left: 3px;
}
.combo span {
  display: flex;
  align-items: center;
  justify-content: center;
  width: 18px;
  background: #e5e5e5;
  border: 1px solid #adadad;
}
.listbox {
  display: flex;
  height: 123px;
  margin: 10px 0 5px 9px;
  padding: 1px;
  border: 1px solid #8c8c8c;
}
.listbox select {
  flex: 1;
  height: 119px;
  overflow: hidden;
}
.listbox option {
  height: 17px;
  min-height: 17px;
  padding: 0 2px;
  line-height: 17px;
}
.listbox option:checked {
  background: linear-gradient(#0078d7, #0078d7);
  -webkit-text-fill-color: #fff;
}
.list-scroll {
  display: flex;
  flex-direction: column;
  align-items: center;
  gap: 4px;
  width: 17px;
  padding: 6px 1px;
}
.list-scroll svg:last-child {
  margin-top: auto;
}
.list-thumb {
  width: 15px;
  height: 60px;
  background: #c6c6c6;
}
.dlg-body p {
  margin: 0 0 6px 9px;
}
.dlg-foot {
  display: flex;
  align-items: flex-start;
  gap: 10px;
  padding: 16px 7px 10px 6px;
}
.dlg-foot a {
  flex: 1;
  margin-top: 3px;
  color: #0078d7;
}

.pointer {
  position: absolute;
  left: 240px;
  top: 190px;
  z-index: 4;
}
```
